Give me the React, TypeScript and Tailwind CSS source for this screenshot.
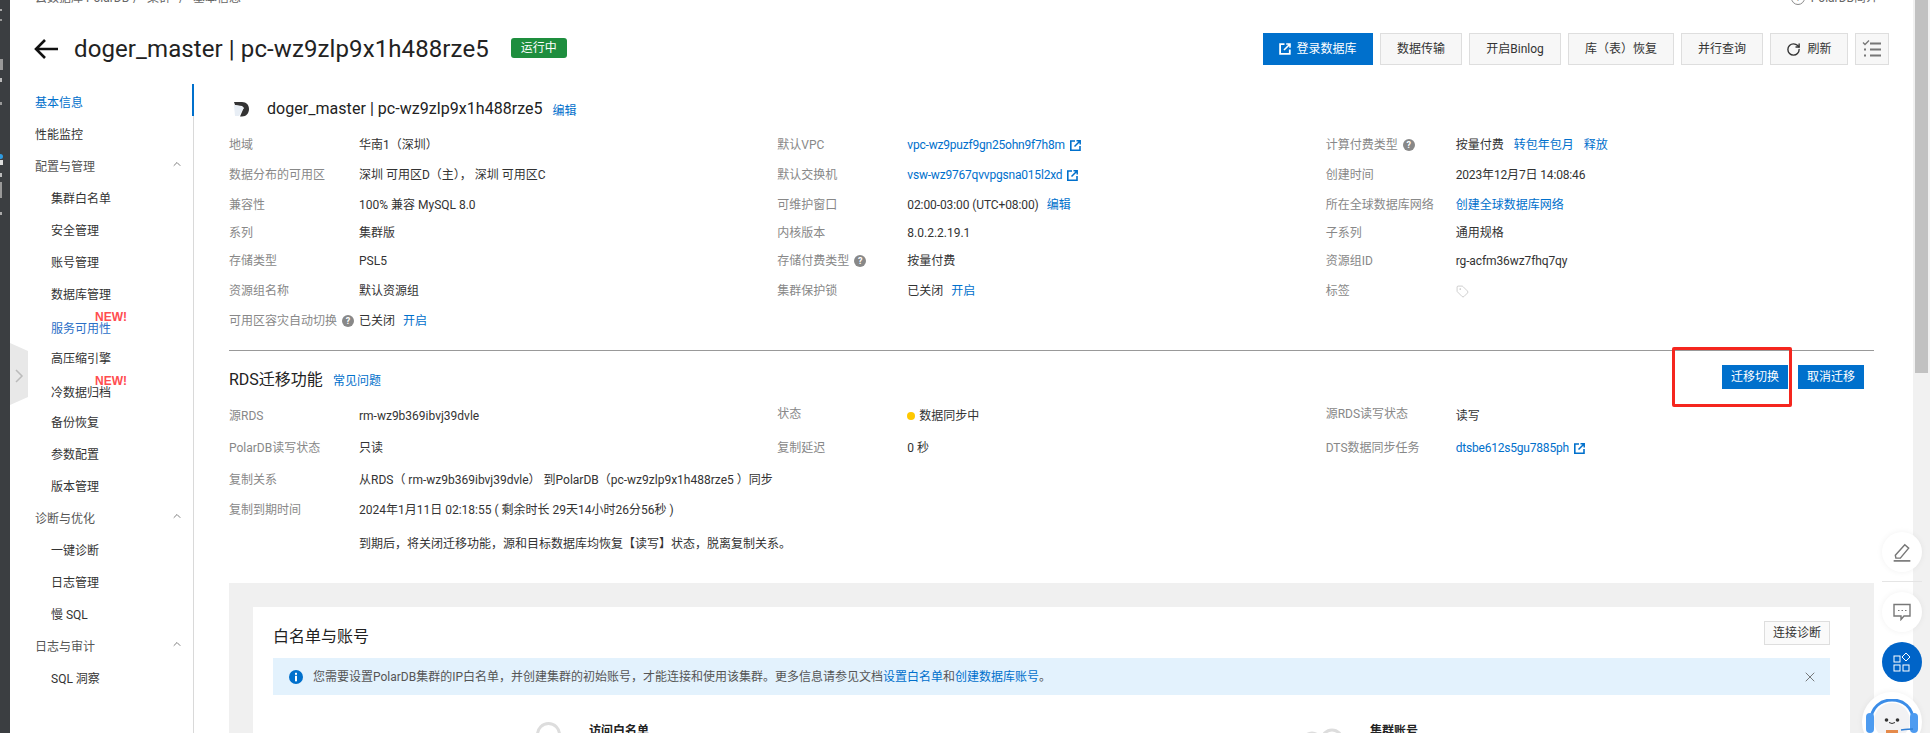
import React from "react";
import { ChevronUp, RotateCw, X, Tag } from "lucide-react";

function Ext() {
  return (
    <svg width="11" height="11" viewBox="0 0 11 11" className="ml-[5px] shrink-0" fill="none">
      <path d="M5 1H.8v9.2H10V6" stroke="#0070cc" strokeWidth="1.6" />
      <path d="M4.5 6.5 9.5 1.5M6.5 .8h3.7v3.7" stroke="#0070cc" strokeWidth="1.5" />
    </svg>
  );
}

function Help() {
  return (
    <span className="ml-[5px] inline-flex h-[12px] w-[12px] shrink-0 items-center justify-center rounded-full bg-[#888] text-[9px] font-bold leading-none text-white">
      ?
    </span>
  );
}

function L({ children }: { children: React.ReactNode }) {
  return <a className="text-[#0070cc]">{children}</a>;
}

function T({ children }: { children: React.ReactNode }) {
  return <a className="tracking-[-0.2px] text-[#0070cc]">{children}</a>;
}

function Cell({ label, help, children, up }: { label: string; help?: boolean; children: React.ReactNode; up?: boolean }) {
  return (
    <div className="flex items-center">
      <div className={up ? "flex w-[130px] shrink-0 items-center -mt-[4px] text-[#888]" : "flex w-[130px] shrink-0 items-center text-[#888]"}>
        {label}
        {help && <Help />}
      </div>
      <div className="flex items-center whitespace-nowrap text-[#333]">{children}</div>
    </div>
  );
}

function Section({ children }: { children: React.ReactNode }) {
  return (
    <div className="flex h-[32px] items-center justify-between pl-[25px] pr-[10px] pt-[6px] text-[#555]">
      <span>{children}</span>
      <ChevronUp size={12} strokeWidth={1.5} className="-mt-[6px] text-[#555]" />
    </div>
  );
}

function Sub({ children }: { children: React.ReactNode }) {
  return <div className="flex h-[32px] items-center pl-[41px] pt-[6px] text-[#333]">{children}</div>;
}

function SubNew({ children, blue }: { children: React.ReactNode; blue?: boolean }) {
  return (
    <div className={blue ? "relative flex h-[32px] items-center pl-[41px] pt-[10px] text-[#2b6fc7]" : "relative flex h-[32px] items-center pl-[41px] pt-[10px] text-[#333]"}>
      {children}
      <span className="absolute left-[85px] top-[2px] font-['Liberation_Sans',sans-serif] text-[12px] font-bold leading-[14px] text-[#ff4d4f]">NEW!</span>
    </div>
  );
}

function Btn({ w, children }: { w: string; children: React.ReactNode }) {
  return <button className={`flex h-[32px] items-center justify-center border border-[#dedede] bg-[#f7f7f7] text-[#333] ${w}`}>{children}</button>;
}

export default function App() {
  return (
    <div className="relative flex h-[733px] w-[1930px] overflow-hidden bg-white font-[Roboto,'Noto_Sans_CJK_SC',sans-serif] text-[12px] leading-[14px] text-[#333]">
      {/* console nav strip */}
      <div className="flex h-full w-[10px] shrink-0 flex-col items-start overflow-hidden bg-[#3b3e41]">
        <span className="ml-0 mt-[9px] h-[2px] w-[2px] bg-[#aaa]" />
        <span className="mt-[8px] h-[2px] w-[2px] bg-[#999]" />
        <span className="mt-[38px] h-[11px] w-[3px] bg-[#999]" />
        <span className="mt-[8px] h-[4px] w-[2px] bg-[#bbb]" />
        <span className="mt-[20px] h-[3px] w-[2px] bg-[#999]" />
        <span className="mt-[49px] h-[5px] w-[3px] rounded-r-full bg-[#2f9be0]" />
        <span className="mt-[1px] h-[5px] w-[3px] bg-[#ddd]" />
        <span className="mt-[8px] h-[4px] w-[2px] bg-[#bbb]" />
        <span className="mt-[5px] h-[16px] w-[2px] bg-[#999]" />
        <span className="mt-[14px] h-[3px] w-[2px] bg-[#aaa]" />
      </div>

      <div className="flex min-w-0 flex-1 flex-col">
        {/* breadcrumb, clipped by the top of the page */}
        <div className="-mt-[9px] flex h-[14px] items-center justify-between pl-[25px] pr-[35px] text-[#666]">
          <div className="flex items-center">
            <span className="w-[88px] whitespace-nowrap">云数据库 PolarDB</span>
            <span className="ml-[10px]">/</span>
            <span className="ml-[9px]">集群</span>
            <span className="ml-[8px]">/</span>
            <span className="ml-[9px]">基本信息</span>
          </div>
          <div className="flex items-center">
            <span className="mr-[6px] flex h-[14px] w-[14px] items-center justify-center rounded-full border border-[#888] text-[9px]">!</span>
            PolarDB简介
          </div>
        </div>

        {/* page header */}
        <div className="mt-[28px] flex h-[32px] items-start pl-[24px] pr-[24px]">
          <svg width="24" height="20" viewBox="0 0 24 20" className="mt-[6px]" fill="none" stroke="#111" strokeWidth="2.6">
            <path d="M24 10H2M11 1 2 10l9 9" />
          </svg>
          <h1 className="ml-[16px] mt-[2px] whitespace-nowrap text-[24px] leading-[28px] tracking-[0.1px] text-[#222]">doger_master | pc-wz9zlp9x1h488rze5</h1>
          <span className="ml-[22px] mt-[5px] flex h-[20px] w-[56px] items-center justify-center rounded-[3px] bg-[#1e8e3e] text-white">运行中</span>
          <div className="ml-auto flex gap-[7px]">
            <button className="flex h-[32px] w-[110px] items-center justify-center gap-[5px] bg-[#0070cc] text-white">
              <svg width="12" height="12" viewBox="0 0 12 12" fill="none" stroke="#fff">
                <path d="M5.5 1.2H1.1v9.7h9.700V6.500" strokeWidth="1.8" />
                <path d="M5 7 10.300 1.700M7.200 1h3.800v3.800" strokeWidth="1.6" />
              </svg>
              登录数据库
            </button>
            <Btn w="w-[82px]">数据传输</Btn>
            <Btn w="w-[92px]">开启Binlog</Btn>
            <Btn w="w-[106px]">库（表）恢复</Btn>
            <Btn w="w-[82px]">并行查询</Btn>
            <Btn w="w-[78px] gap-[6px]">
              <RotateCw size={15} strokeWidth={2.2} className="text-[#333]" />
              刷新
            </Btn>
            <Btn w="w-[34px]">
              <svg width="20" height="20" viewBox="0 0 20 20" fill="none">
                <path d="M1 3.500 3 5.500 7 1.500" stroke="#777" strokeWidth="1.3" />
                <path d="M8 4.500h11M8 10.500h11M8 16.500h11" stroke="#777" strokeWidth="2" />
                <path d="M2 10.500h3M2 16.500h3" stroke="#777" strokeWidth="2" strokeDasharray="2 1" />
              </svg>
            </Btn>
          </div>
        </div>

        {/* body */}
        <div className="mt-[19px] flex min-h-0 flex-1">
          <nav className="w-[184px] shrink-0 border-r border-[#d9d9d9]">
            <div className="-mr-px flex h-[32px] items-center border-r-2 border-[#0070cc] pl-[25px] pt-[6px] text-[#0070cc]">基本信息</div>
            <div className="flex h-[32px] items-center pl-[25px] pt-[6px] text-[#333]">性能监控</div>
            <Section>配置与管理</Section>
            <Sub>集群白名单</Sub>
            <Sub>安全管理</Sub>
            <Sub>账号管理</Sub>
            <Sub>数据库管理</Sub>
            <SubNew blue>服务可用性</SubNew>
            <Sub>高压缩引擎</Sub>
            <SubNew>冷数据归档</SubNew>
            <Sub>备份恢复</Sub>
            <Sub>参数配置</Sub>
            <Sub>版本管理</Sub>
            <Section>诊断与优化</Section>
            <Sub>一键诊断</Sub>
            <Sub>日志管理</Sub>
            <Sub>慢 SQL</Sub>
            <Section>日志与审计</Section>
            <Sub>SQL 洞察</Sub>
          </nav>

          <main className="min-w-0 flex-1 pl-[35px] pr-[39px]">
            <div className="mb-[6px] mt-[10px] flex h-[30px] items-start">
              <svg width="16" height="16" viewBox="0 0 16 16" className="ml-[5px] mt-[7px] shrink-0">
                <path d="M0 1h8c4.500 0 7 3 7 7s-2.500 7.500-7 7.500H6L9 8.500 10 7 8 5 1 4z" fill="#333" />
                <path d="M0 4l8 1.500L9.500 7 5 15H1z" fill="#e8eef5" />
              </svg>
              <span className="ml-[17px] mt-[7px] whitespace-nowrap text-[16px] leading-[16px] tracking-[0.04px] text-[#222]">doger_master | pc-wz9zlp9x1h488rze5</span>
              <a className="ml-[10px] mt-[10px] text-[#0070cc]">编辑</a>
            </div>

            <div className="grid grid-cols-3 grid-rows-[30px_30px_30px_26px_30px_30px_30px]">
              <Cell label="地域">华南1（深圳）</Cell>
              <Cell label="默认VPC"><T>vpc-wz9puzf9gn25ohn9f7h8m</T><Ext /></Cell>
              <Cell label="计算付费类型" help>
                按量付费<a className="ml-[10px] text-[#0070cc]">转包年包月</a><a className="ml-[10px] text-[#0070cc]">释放</a>
              </Cell>
              <Cell label="数据分布的可用区">深圳 可用区D（主）， 深圳 可用区C</Cell>
              <Cell label="默认交换机"><T>vsw-wz9767qvvpgsna015l2xd</T><Ext /></Cell>
              <Cell label="创建时间"><span className="tracking-[-0.15px]">2023年12月7日 14:08:46</span></Cell>
              <Cell label="兼容性">100% 兼容 MySQL 8.0</Cell>
              <Cell label="可维护窗口"><span className="tracking-[-0.1px]">02:00-03:00 (UTC+08:00)</span><a className="ml-[8px] text-[#0070cc]">编辑</a></Cell>
              <Cell label="所在全球数据库网络"><L>创建全球数据库网络</L></Cell>
              <Cell label="系列">集群版</Cell>
              <Cell label="内核版本">8.0.2.2.19.1</Cell>
              <Cell label="子系列">通用规格</Cell>
              <Cell label="存储类型">PSL5</Cell>
              <Cell label="存储付费类型" help>按量付费</Cell>
              <Cell label="资源组ID"><span className="tracking-[-0.1px]">rg-acfm36wz7fhq7qy</span></Cell>
              <Cell label="资源组名称">默认资源组</Cell>
              <Cell label="集群保护锁">已关闭<a className="ml-[8px] text-[#0070cc]">开启</a></Cell>
              <Cell label="标签"><Tag size={13} strokeWidth={1.3} className="text-[#bbb]" /></Cell>
              <div className="col-span-3 flex items-center text-[#888]">
                可用区容灾自动切换<Help />
                <span className="ml-[5px] text-[#333]">已关闭</span>
                <a className="ml-[8px] text-[#0070cc]">开启</a>
              </div>
            </div>

            <div className="mt-[14px] h-px bg-[#999]" />

            <div className="mt-[14px] flex h-[24px] items-start pr-[10px]">
              <h2 className="mt-[6px] text-[16px] leading-[18px] text-[#222]">RDS迁移功能</h2>
              <a className="ml-[10px] mt-[9px] text-[#0070cc]">常见问题</a>
              <div className="ml-auto flex gap-[10px]">
                <button className="flex h-[24px] w-[66px] items-center justify-center bg-[#0070cc] text-white">迁移切换</button>
                <button className="flex h-[24px] w-[66px] items-center justify-center bg-[#0070cc] text-white">取消迁移</button>
              </div>
            </div>

            <div className="mt-[11px] grid grid-cols-3 grid-rows-[32px_32px]">
              <Cell label="源RDS">rm-wz9b369ibvj39dvle</Cell>
              <Cell label="状态" up>
                <span className="mr-[4px] h-[8px] w-[8px] rounded-full bg-[#ffc800]" />数据同步中
              </Cell>
              <Cell label="源RDS读写状态" up>读写</Cell>
              <Cell label="PolarDB读写状态">只读</Cell>
              <Cell label="复制延迟">0 秒</Cell>
              <Cell label="DTS数据同步任务"><T>dtsbe612s5gu7885ph</T><Ext /></Cell>
            </div>
            <div className="flex h-[32px] items-center">
              <span className="w-[130px] text-[#888]">复制关系</span>
              <span className="whitespace-nowrap">从RDS（ rm-wz9b369ibvj39dvle） 到PolarDB（pc-wz9zlp9x1h488rze5 ）同步</span>
            </div>
            <div className="flex h-[28px] items-center">
              <span className="w-[130px] text-[#888]">复制到期时间</span>
              <span className="whitespace-nowrap">2024年1月11日 02:18:55 ( 剩余时长 29天14小时26分56秒 )</span>
            </div>
            <div className="flex h-[40px] items-center pl-[130px] whitespace-nowrap">
              到期后，将关闭迁移功能，源和目标数据库均恢复【读写】状态，脱离复制关系。
            </div>

            <section className="mt-[19px] bg-[#f0f0f0] px-[24px] pt-[24px]">
              <div className="bg-white px-[20px] pt-[14px]">
                <div className="flex h-[24px] items-start justify-between">
                  <h3 className="mt-[7px] text-[16px] leading-[18px] text-[#222]">白名单与账号</h3>
                  <button className="flex h-[24px] w-[66px] items-center justify-center border border-[#dedede] bg-[#fafafa] text-[#333]">连接诊断</button>
                </div>
                <div className="mt-[13px] flex h-[37px] items-center bg-[#e3f2fd] pl-[16px] pr-[12px] text-[#555]">
                  <svg width="14" height="14" viewBox="0 0 14 14" className="shrink-0">
                    <circle cx="7" cy="7" r="7" fill="#0070cc" />
                    <rect x="6" y="5.800" width="2" height="5.500" fill="#fff" />
                    <rect x="6" y="2.800" width="2" height="2" fill="#fff" />
                  </svg>
                  <span className="ml-[10px] whitespace-nowrap">
                    您需要设置PolarDB集群的IP白名单，并创建集群的初始账号，才能连接和使用该集群。更多信息请参见文档<L>设置白名单</L>和<L>创建数据库账号</L>。
                  </span>
                  <X size={16} strokeWidth={1.3} className="ml-auto text-[#666]" />
                </div>
                <div className="mt-[27px] flex h-[40px] items-start">
                  <span className="ml-[263px] h-[25px] w-[25px] shrink-0 rounded-full border-[3px] border-[#ddd]" />
                  <span className="ml-[28px] mt-[2px] font-bold text-[#222]">访问白名单</span>
                  <svg width="46" height="20" viewBox="0 0 46 20" className="ml-[651px] mt-[6px]" fill="none" stroke="#ddd" strokeWidth="3">
                    <circle cx="12" cy="14" r="9" />
                    <circle cx="32" cy="12" r="10" />
                  </svg>
                  <span className="ml-[24px] mt-[2px] font-bold text-[#222]">集群账号</span>
                </div>
              </div>
            </section>
          </main>
        </div>
      </div>

      {/* scrollbar */}
      <div className="h-full w-[17px] shrink-0 bg-[#f1f1f1] pl-[2px] pr-[2px]">
        <div className="h-[373px] bg-[#c1c1c1]" />
      </div>

      {/* sidebar collapse tab */}
      <svg width="18" height="62" viewBox="0 0 18 62" className="absolute left-[10px] top-[343px]">
        <path d="M0 0 18 8v46L0 62z" fill="#e8e8e8" />
        <path d="M6 27l6 6-6 6" fill="none" stroke="#bbb" strokeWidth="1.5" />
      </svg>

      {/* annotation frame */}
      <div className="absolute left-[1672px] top-[347px] h-[60px] w-[120px] rounded-[2px] border-[3px] border-[#f5261e]" />

      {/* floating tools */}
      <button className="absolute left-[1882px] top-[532px] flex h-[40px] w-[40px] items-center justify-center rounded-full bg-white shadow-[0_0_6px_rgba(0,0,0,0.06)]">
        <svg width="20" height="20" viewBox="0 0 18 18" fill="none" stroke="#777" strokeWidth="1.3">
          <path d="M3 12 11.500 2.500l3.500 3-7.500 9H3.500z" />
          <path d="M1.500 17h15" strokeWidth="1.500" />
        </svg>
      </button>
      <div className="absolute left-[1882px] top-[581px] h-px w-[40px] bg-[#e5e5e5]" />
      <button className="absolute left-[1882px] top-[592px] flex h-[40px] w-[40px] items-center justify-center rounded-full bg-white shadow-[0_0_6px_rgba(0,0,0,0.06)]">
        <svg width="18" height="18" viewBox="0 0 18 18" fill="none" stroke="#777" strokeWidth="1.4">
          <path d="M1 1.500h16v11.500h-6l-3 3.500v-3.500H1z" />
          <path d="M5 7.500h1.500M8.500 7.500H10M12 7.500h1.500" strokeWidth="1.200" />
        </svg>
      </button>
      <button className="absolute left-[1882px] top-[642px] flex h-[40px] w-[40px] items-center justify-center rounded-full bg-[#0064c8]">
        <svg width="18" height="20" viewBox="0 0 18 20" fill="none" stroke="#fff" strokeWidth="1">
          <rect x="1" y="4" width="6" height="6" />
          <rect x="1" y="13" width="6" height="6" />
          <rect x="10" y="13" width="6" height="6" />
          <path d="M13 1l4 4-4 4-4-4z" />
        </svg>
      </button>
      <div className="absolute left-[1862px] top-[692px] flex h-[60px] w-[60px] justify-center rounded-full bg-white shadow-[0_0_6px_rgba(0,0,0,0.06)]">
        <svg width="54" height="44" viewBox="0 0 54 44" className="mt-[7px]" fill="none">
          <path d="M6 22C6 8 16 1 27 1s21 7 21 21" stroke="#3b8de8" strokeWidth="3" />
          <rect x="1" y="14" width="8" height="20" rx="4" fill="#4d9bf0" />
          <rect x="45" y="14" width="8" height="20" rx="4" fill="#4d9bf0" />
          <circle cx="27" cy="22" r="18" fill="#f2f2f4" />
          <rect x="21" y="31" width="12" height="4" fill="#e58a4a" />
          <circle cx="21.500" cy="21" r="1.800" fill="#333" />
          <circle cx="32.500" cy="21" r="1.800" fill="#333" />
          <path d="M24 23.500q3 2 6 0" stroke="#333" strokeWidth="1" />
          <path d="M48 30q-4 0-12 1" stroke="#2f7fd6" strokeWidth="1.500" />
        </svg>
      </div>
    </div>
  );
}
